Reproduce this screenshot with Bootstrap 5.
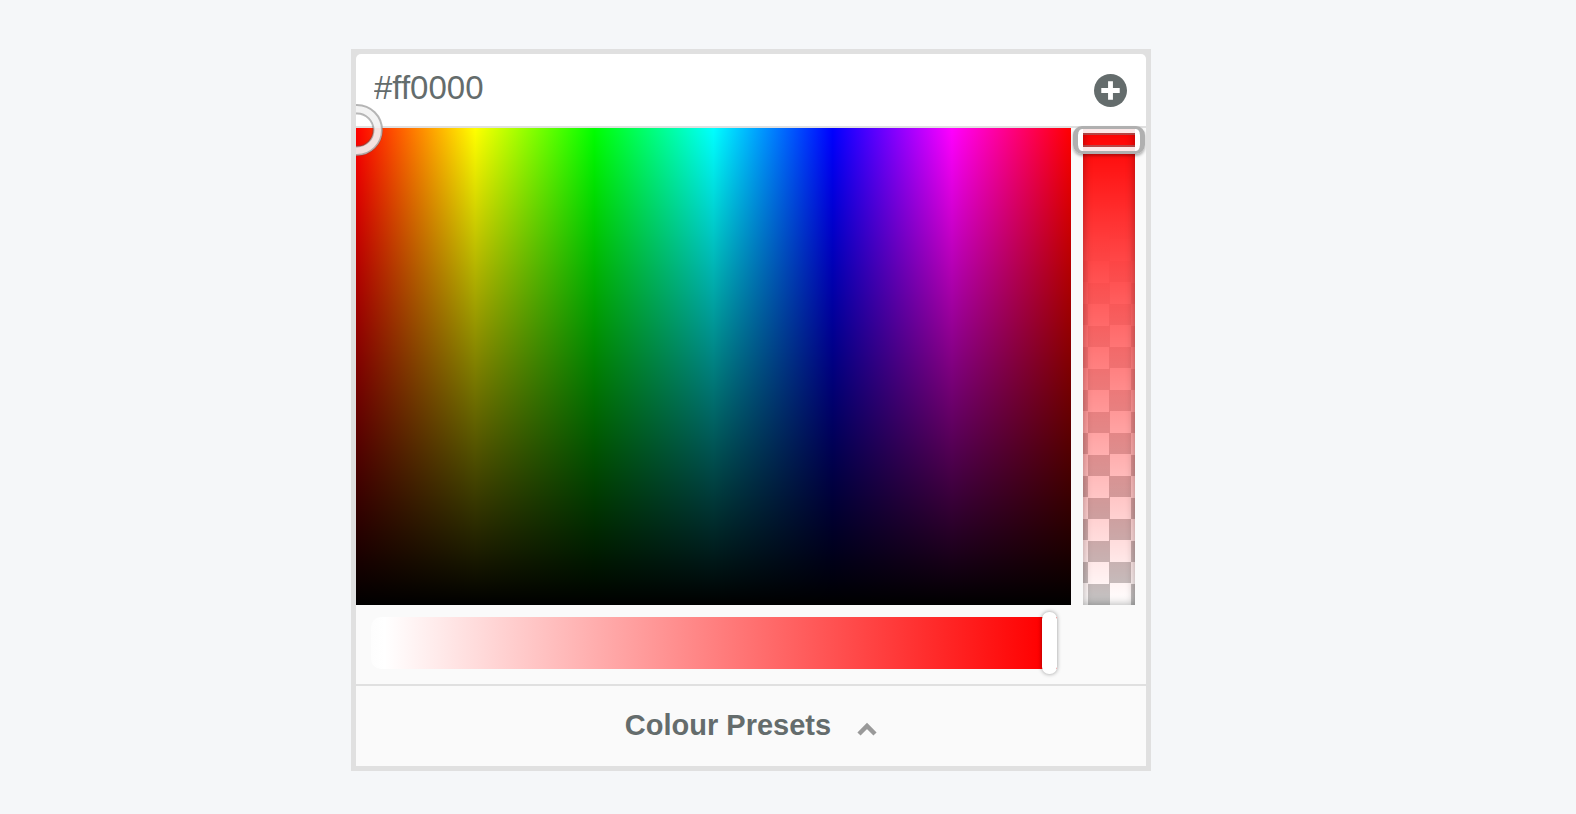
<!DOCTYPE html>
<html lang="en">
<head>
<meta charset="utf-8">
<meta name="viewport" content="width=device-width, initial-scale=1">
<title>Colour picker</title>
<link href="https://cdn.jsdelivr.net/npm/bootstrap@5.3.0/dist/css/bootstrap.min.css" rel="stylesheet">
<style>
  body { background: #f5f7f9; color: #646c6c; font-family: "Liberation Sans", Arial, sans-serif; }
  .stage { padding: 49px 74px 43px 0; }
  .picker { width: 100%; max-width: 800px; border: 5px solid #e0e0e0; background: #fafafa; overflow: clip; }
  .picker-head { height: 74px; padding: 0 19px 0 18px; background: #fff; border-bottom: 2px solid #e0e0e0; border-radius: 5px 5px 0 0; }
  .corners { background: #e0e0e0; }
  .hex-input { font-size: 33px; line-height: 40px; height: 44px; padding: 0 0 4px; color: inherit; min-width: 0; outline: 0; }
  .add-btn { line-height: 0; }
  .work { gap: 12px; padding-right: 11px; }
  .spectrum { height: 477px;
    background: linear-gradient(to bottom, transparent, #000),
      linear-gradient(to right, #f00, #ff0, #0f0, #0ff, #00f, #f0f, #f00); }
  .ring { left: -25px; top: -24px; width: 52px; height: 52px; }
  .alpha { width: 52px; height: 477px; }
  .alpha-fill { box-shadow: inset 0 0 10px rgba(0,0,0,.35);
    background: linear-gradient(to bottom, #f00, rgba(255,0,0,0)),
      linear-gradient(to bottom, #fff 20%, rgba(255,255,255,0) 80%),
      repeating-conic-gradient(#c3c3c3 0 25%, #fff 0 50%) 5px 4px / 43px 43px; }
  .alpha-input { opacity: 0; writing-mode: vertical-lr; }
  .alpha-thumb { left: -10px; top: -2px; width: 72px; height: 28px; border: solid #b0b0b0; border-width: 3px 5px; border-radius: 9px;
    box-shadow: 0 2px 3px rgba(0,0,0,.3);
    background: linear-gradient(to right, #fff 5px, transparent 0 57px, #fff 0) padding-box,
      linear-gradient(to bottom, rgba(255,255,255,.9) 4px, rgba(140,110,110,.6) 0 6px, transparent 0 16px, rgba(140,110,110,.6) 0 18px, rgba(255,255,255,.9) 0) padding-box; }
  .light-row { height: 81px; padding: 7px 89px 0 15px; border-bottom: 2px solid #e0e0e0; }
  .light-input { appearance: none; -webkit-appearance: none; width: 100%; height: 62px; background: none; }
  .light-input::-webkit-slider-runnable-track { height: 52px; border-radius: 10px 0 0 10px; background: linear-gradient(to right, #fdfdfd, #fff 2%, #f00 98%); }
  .light-input::-webkit-slider-thumb { -webkit-appearance: none; width: 15px; height: 62px; margin-top: -5px; background: #fff; border-radius: 7px; box-shadow: 0 0 4px rgba(0,0,0,.4); }
  .presets { height: 80px; gap: 26px; font-size: 29px; line-height: 36px; color: inherit; }
  .presets-label { padding-bottom: 2px; }
  .chevron { margin-top: 6px; }
</style>
</head>
<body>
<main class="stage d-flex justify-content-center">
  <section class="picker" aria-label="Colour picker">
    <div class="corners">
      <div class="picker-head d-flex align-items-center justify-content-between">
        <input class="hex-input flex-grow-1 border-0 bg-transparent" type="text" value="#ff0000" aria-label="Hex colour">
        <button class="add-btn border-0 p-0 bg-transparent" type="button" aria-label="Add preset">
          <svg width="33" height="33" viewBox="0 0 34 34"><circle cx="17" cy="17" r="17" fill="#646c6c"/><path d="M17 7.500v19M7.500 17h19" stroke="#fff" stroke-width="5"/></svg>
        </button>
      </div>
    </div>
    <div class="work d-flex">
      <div class="spectrum position-relative flex-grow-1">
        <svg class="ring position-absolute" viewBox="0 0 52 52" aria-hidden="true">
          <g fill="none"><circle cx="26" cy="26" r="21" stroke="#f2f2f2" stroke-opacity=".92" stroke-width="9"/>
          <circle cx="26" cy="26" r="25" stroke="#555" stroke-opacity=".4" stroke-width="2"/>
          <circle cx="26" cy="26" r="16.500" stroke="#555" stroke-opacity=".4" stroke-width="2"/></g>
        </svg>
      </div>
      <div class="alpha position-relative flex-shrink-0">
        <div class="alpha-fill w-100 h-100"></div>
        <div class="alpha-thumb position-absolute"></div>
        <input class="alpha-input position-absolute top-0 start-0 w-100 h-100 m-0" type="range" min="0" max="100" value="0" aria-label="Opacity">
      </div>
    </div>
    <div class="light-row">
      <input class="light-input d-block m-0" type="range" min="0" max="100" value="100" aria-label="Lightness">
    </div>
    <button class="presets w-100 border-0 bg-transparent p-0 fw-bold d-flex align-items-center justify-content-center" type="button">
      <span class="presets-label">Colour Presets</span>
      <svg class="chevron" width="20" height="14" viewBox="0 0 20 14" aria-hidden="true"><path d="M2 12l8-8 8 8" fill="none" stroke="#999" stroke-width="4.500"/></svg>
    </button>
  </section>
</main>
<script src="https://cdn.jsdelivr.net/npm/bootstrap@5.3.0/dist/js/bootstrap.bundle.min.js"></script>
</body>
</html>
